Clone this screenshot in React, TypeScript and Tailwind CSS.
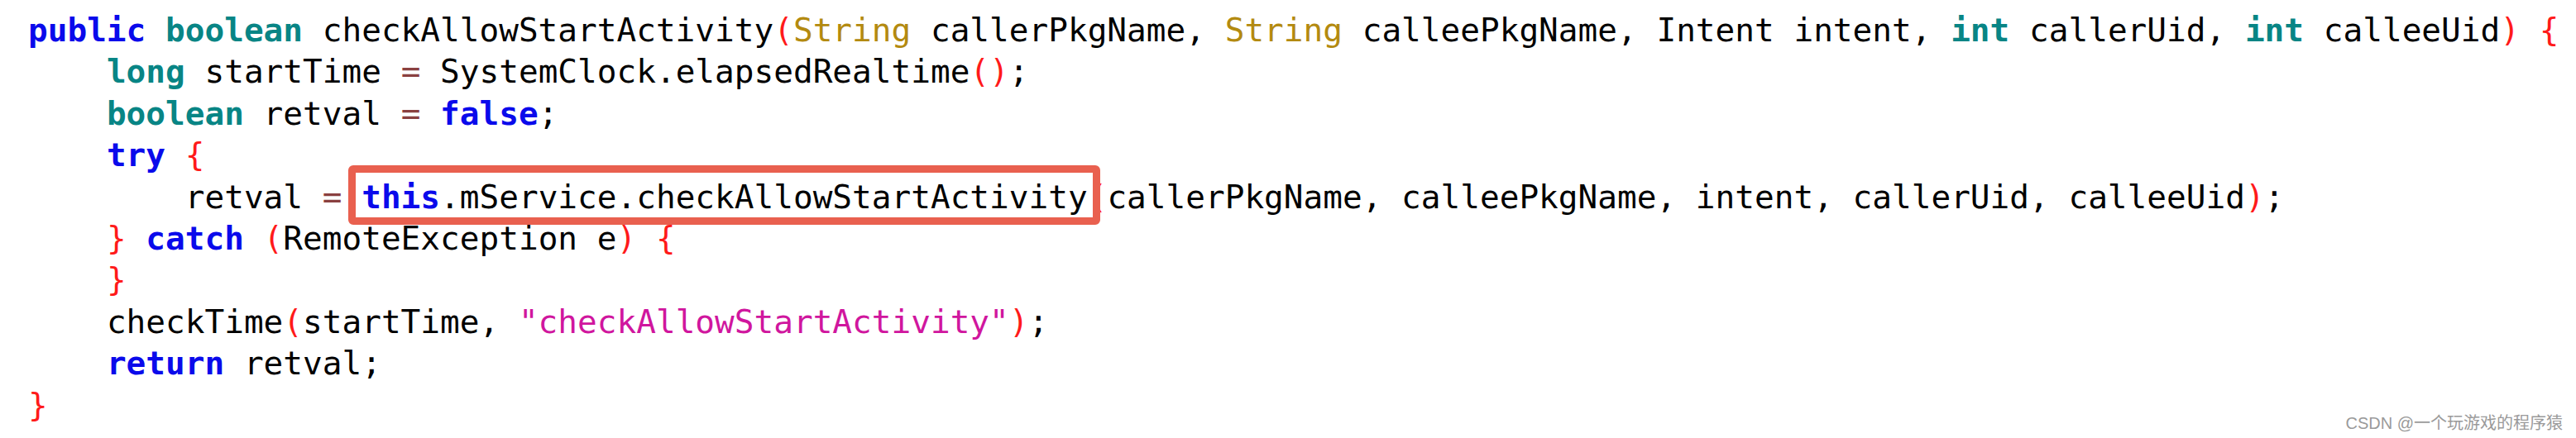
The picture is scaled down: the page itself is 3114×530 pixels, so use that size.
import React from "react";

const K = ({ children }: { children: React.ReactNode }) => (
  <span className="font-bold text-[#0a0aeb]">{children}</span>
);
const T = ({ children }: { children: React.ReactNode }) => (
  <span className="font-bold text-[#088585]">{children}</span>
);
const S = ({ children }: { children: React.ReactNode }) => (
  <span className="text-[#b38a10]">{children}</span>
);
const P = ({ children }: { children: React.ReactNode }) => (
  <span className="text-[#ff1a1a]">{children}</span>
);
const E = ({ children }: { children: React.ReactNode }) => (
  <span className="text-[#8a4040]">{children}</span>
);
const Str = ({ children }: { children: React.ReactNode }) => (
  <span className="text-[#d0169e]">{children}</span>
);

export default function App() {
  return (
    <div className="relative h-[530px] w-full overflow-hidden bg-white">
      <pre className="m-0 pl-[34px] pt-[11px] font-['DejaVu_Sans_Mono',monospace] text-[39.4px] leading-[50.4px] text-black">
        <div>
          <K>public</K> <T>boolean</T> checkAllowStartActivity<P>(</P>
          <S>String</S> callerPkgName, <S>String</S> calleePkgName, Intent intent,{" "}
          <T>int</T> callerUid, <T>int</T> calleeUid<P>)</P> <P>{"{"}</P>
        </div>
        <div>
          {"    "}
          <T>long</T> startTime <E>=</E> SystemClock.elapsedRealtime<P>()</P>;
        </div>
        <div>
          {"    "}
          <T>boolean</T> retval <E>=</E> <K>false</K>;
        </div>
        <div>
          {"    "}
          <K>try</K> <P>{"{"}</P>
        </div>
        <div>
          {"        "}retval <E>=</E>{" "}
          <span className="relative">
            <K>this</K>.mService.checkAllowStartActivity
            <span className="absolute left-[-16px] right-[-15px] top-[-15px] bottom-[-11px] z-10 rounded-[6px] border-[9px] border-[#e9604f]" />
          </span>
          <P>(</P>callerPkgName, calleePkgName, intent, callerUid, calleeUid<P>)</P>;
        </div>
        <div>
          {"    "}
          <P>{"}"}</P> <K>catch</K> <P>(</P>RemoteException e<P>)</P> <P>{"{"}</P>
        </div>
        <div>
          {"    "}
          <P>{"}"}</P>
        </div>
        <div>
          {"    "}checkTime<P>(</P>startTime, <Str>"checkAllowStartActivity"</Str>
          <P>)</P>;
        </div>
        <div>
          {"    "}
          <K>return</K> retval;
        </div>
        <div>
          <P>{"}"}</P>
        </div>
      </pre>
      <div className="absolute bottom-[6px] right-[16px] font-['Liberation_Sans','Noto_Sans_CJK_SC',sans-serif] text-[20px] leading-[24px] text-[#9a9a9a]">
        CSDN @一个玩游戏的程序猿
      </div>
    </div>
  );
}
